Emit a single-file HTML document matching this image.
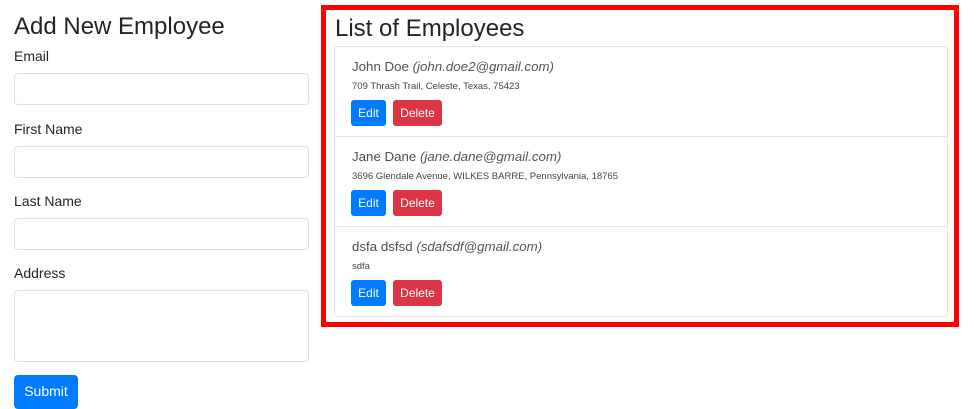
<!DOCTYPE html>
<html><head><style>
*{box-sizing:border-box}
body{margin:0;width:980px;height:406px;overflow:hidden;background:#fff;font-family:"Liberation Sans",sans-serif;color:#212529;position:relative}
.a{position:absolute}
h2{margin:0;font-weight:500;font-size:24px;white-space:nowrap}
.lbl{font-size:14px;color:#212529}
.inp{border:1px solid #dcdfe3;border-radius:4px;background:#fff}
.btn{position:absolute;color:#fff;font-size:12px;border-radius:3px;text-align:center;line-height:26px;height:26px}
.ed{background:#007bff;width:35px}
.de{background:#dc3545;width:49px}
.nm{font-size:13.3px;color:#495057;white-space:nowrap}
.nm i{color:#555}
.ad{font-size:9.5px;color:#444;white-space:nowrap}
</style></head><body>
<h2 class="a" style="left:14px;top:13px">Add New Employee</h2>
<div class="a lbl" style="left:14px;top:48px">Email</div>
<div class="a inp" style="left:14px;top:73px;width:295px;height:32px"></div>
<div class="a lbl" style="left:14px;top:121px">First Name</div>
<div class="a inp" style="left:14px;top:146px;width:295px;height:32px"></div>
<div class="a lbl" style="left:14px;top:193px">Last Name</div>
<div class="a inp" style="left:14px;top:218px;width:295px;height:32px"></div>
<div class="a lbl" style="left:14px;top:265px">Address</div>
<div class="a inp" style="left:14px;top:290px;width:295px;height:72px"></div>
<div class="a" style="left:14px;top:375px;width:64px;height:34px;background:#007bff;border-radius:4px;color:#fff;font-size:14px;text-align:center;line-height:33px">Submit</div>

<div class="a" style="left:321px;top:5px;width:638px;height:322px;border:5px solid #f00"></div>
<h2 class="a" style="left:335px;top:15px">List of Employees</h2>
<div class="a" style="left:334px;top:46px;width:614px;height:271px;border:1px solid #e3e5e8;border-radius:3px"></div>
<div class="a" style="left:335px;top:136px;width:612px;height:1px;background:#e3e5e8"></div>
<div class="a" style="left:335px;top:226px;width:612px;height:1px;background:#e3e5e8"></div>

<div class="a nm" style="left:352px;top:59px">John Doe <i>(john.doe2@gmail.com)</i></div>
<div class="a ad" style="left:352px;top:81px">709 Thrash Trail, Celeste, Texas, 75423</div>
<div class="btn ed" style="left:351px;top:100px">Edit</div>
<div class="btn de" style="left:393px;top:100px">Delete</div>

<div class="a nm" style="left:352px;top:149px">Jane Dane <i>(jane.dane@gmail.com)</i></div>
<div class="a ad" style="left:352px;top:171px">3696 Glendale Avenue, WILKES BARRE, Pennsylvania, 18765</div>
<div class="btn ed" style="left:351px;top:190px">Edit</div>
<div class="btn de" style="left:393px;top:190px">Delete</div>

<div class="a nm" style="left:352px;top:239px">dsfa dsfsd <i>(sdafsdf@gmail.com)</i></div>
<div class="a ad" style="left:352px;top:261px">sdfa</div>
<div class="btn ed" style="left:351px;top:280px">Edit</div>
<div class="btn de" style="left:393px;top:280px">Delete</div>
</body></html>
